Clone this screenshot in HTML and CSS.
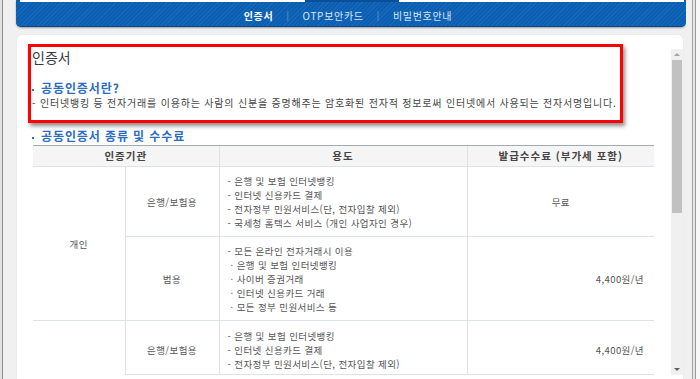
FILE: index.html
```html
<!DOCTYPE html>
<html lang="ko">
<head>
<meta charset="utf-8">
<title>인증서</title>
<link rel="stylesheet" href="styles.css">
</head>
<body>
<div class="window">
  <div class="frame-left"></div>
  <div class="main">
    <div class="topbar">
      <div class="tabstrip"><span class="tab-white"></span><span class="tab-active"></span><span class="tab-white"></span></div>
      <nav class="subnav">
        <a class="nav-item on">인증서</a><span class="sep">|</span><a class="nav-item">OTP보안카드</a><span class="sep">|</span><a class="nav-item">비밀번호안내</a>
      </nav>
    </div>
    <div class="panel">
      <div class="scroller">
        <div class="content">
          <h2 class="title">인증서</h2>
          <h3 class="bul">공동인증서란?</h3>
          <p class="desc">- 인터넷뱅킹 등 전자거래를 이용하는 사람의 신분을 증명해주는 암호화된 전자적 정보로써 인터넷에서 사용되는 전자서명입니다.</p>
          <h3 class="bul bul-2">공동인증서 종류 및 수수료</h3>
          <table class="fee">
            <colgroup><col class="c1"><col class="c2"><col class="c3"><col class="c4"></colgroup>
            <thead>
              <tr><th colspan="2">인증기관</th><th>용도</th><th>발급수수료 (부가세 포함)</th></tr>
            </thead>
            <tbody>
              <tr>
                <td rowspan="2" class="ctr">개인</td>
                <td class="ctr">은행/보험용</td>
                <td class="use">- 은행 및 보험 인터넷뱅킹<br>- 인터넷 신용카드 결제<br>- 전자정부 민원서비스(단, 전자입찰 제외)<br>- 국세청 홈텍스 서비스 (개인 사업자인 경우)</td>
                <td class="ctr">무료</td>
              </tr>
              <tr>
                <td class="ctr">범용</td>
                <td class="use">- 모든 온라인 전자거래시 이용<br><span class="sub">· 은행 및 보험 인터넷뱅킹</span><br><span class="sub">· 사이버 증권거래</span><br><span class="sub">· 인터넷 신용카드 거래</span><br><span class="sub">· 모든 정부 민원서비스 등</span></td>
                <td class="price">4,400원/년</td>
              </tr>
              <tr class="last">
                <td class="blank"></td>
                <td class="ctr">은행/보험용</td>
                <td class="use">- 은행 및 보험 인터넷뱅킹<br>- 인터넷 신용카드 결제<br>- 전자정부 민원서비스(단, 전자입찰 제외)</td>
                <td class="price">4,400원/년</td>
              </tr>
            </tbody>
          </table>
        </div>
        <div class="scrollbar">
          <div class="sb-btn sb-up"></div>
          <div class="sb-thumb"></div>
          <div class="sb-track"></div>
          <div class="sb-btn sb-down"></div>
        </div>
      </div>
      <div class="highlight"></div>
    </div>
  </div>
  <div class="frame-right"></div>
</div>
</body>
</html>
```
FILE: styles.css
```css
* { box-sizing: border-box; }
html, body { margin: 0; padding: 0; }
body {
  width: 700px;
  height: 379px;
  overflow: hidden;
  background: #f0f0f0;
  font-family: "Noto Sans CJK KR", "Noto Sans", sans-serif;
}
.window { display: flex; height: 379px; }
.frame-left {
  width: 16px;
  flex: none;
  background: linear-gradient(to right, #e2e2e2 0 2px, #8c8c8c 2px 3px, #f0f0f0 3px);
}
.frame-right {
  flex: 1;
  background: linear-gradient(to right, #f0f0f0 0 6px, #a2a2a2 6px 7px, #e6e6e6 7px 9px, #9a9a9a 9px 10px, #f8f8f8 10px);
}
.main {
  width: 670px;
  flex: none;
  display: flex;
  flex-direction: column;
}

/* top blue bar */
.topbar {
  height: 27px;
  flex: none;
  border-radius: 0 0 5px 5px;
  background-color: #0b5fb3;
  background-image: repeating-linear-gradient(135deg, rgba(255,255,255,0.06) 0 1px, rgba(255,255,255,0) 1px 3px);
  border-bottom: 1px solid #094a8e;
  box-shadow: 0 1px 2px rgba(0,0,0,0.35);
}
.tabstrip { display: flex; height: 2px; margin: 0 2px 0 4px; }
.tab-white { flex: 1; background: #fff; }
.tab-active { width: 94px; flex: none; background: #0a4f97; }
.subnav {
  display: flex;
  justify-content: center;
  align-items: center;
  padding: 7px 6px 0 0;
  font-size: 10px;
  line-height: 14px;
  letter-spacing: 0.7px;
}
.nav-item { color: #d9e6f4; }
.nav-item.on { color: #fff; font-weight: bold; }
.sep { color: #6f9fd3; margin: 0 13px; font-size: 9px; }

/* content panel */
.panel {
  position: relative;
  flex: 1;
  margin: 8px 3px 0 1px;
  background: #fff;
  border-radius: 5px 5px 0 0;
  box-shadow: 0 0 1px rgba(0,0,0,0.12);
}
.scroller {
  display: flex;
  align-items: flex-start;
  height: 340px;
  padding: 10px 0 0 11px;
}
.content {
  flex: 1;
  height: 330px;
  overflow: hidden;
  padding-left: 4px;
  color: #333;
}
.title {
  margin: 0;
  font-size: 14px;
  line-height: 24px;
  font-weight: normal;
  color: #383846;
}
.bul {
  margin: 12px 0 0;
  font-size: 12px;
  line-height: 13px;
  font-weight: bold;
  color: #2d6dbf;
  letter-spacing: 0.9px;
}
.bul::before {
  content: "";
  display: inline-block;
  width: 2px;
  height: 2px;
  background: #2d6dbf;
  margin-right: 7px;
  vertical-align: middle;
}
.bul-2 { margin-top: 20px; }
.desc {
  margin: 3px 0 0;
  font-size: 10px;
  line-height: 12px;
  color: #444;
  letter-spacing: 0.8px;
}

/* table */
.fee {
  margin: 3px 0 0 1px;
  width: 621px;
  border-collapse: collapse;
  table-layout: fixed;
  font-size: 9.5px;
  color: #555;
  letter-spacing: 0.4px;
}
.c1 { width: 92px; }
.c2 { width: 94px; }
.c3 { width: 248px; }
.c4 { width: 187px; }
.fee thead th {
  height: 21px;
  padding: 0;
  background: #f5f5f5;
  border-top: 1px solid #9eabbb;
  border-bottom: 1px solid #dde2e8;
  border-left: 1px solid #dde2e8;
  font-size: 10.5px;
  font-weight: bold;
  color: #444;
  line-height: 14px;
  letter-spacing: 1px;
}
.fee thead th:first-child { border-left: none; }
.fee td {
  padding: 7px 0 6px;
  line-height: 14px;
  border: 1px solid #dde2e8;
  vertical-align: middle;
}
.fee tr.last td { padding-top: 8px; padding-bottom: 3px; }
.fee tr td:first-child { border-left: none; }
.fee td:last-child { border-right: none; }
.fee td.blank { border-bottom: none; }
.fee .ctr { text-align: center; }
.fee .use { padding-left: 8px; }
.fee .sub { padding-left: 3px; }
.fee .price { text-align: right; padding-right: 10px; }

/* scrollbar */
.scrollbar {
  width: 12px;
  flex: none;
  height: 326px;
  margin-top: 4px;
  background: #f0f0f0;
  display: flex;
  flex-direction: column;
}
.sb-btn { height: 11px; flex: none; position: relative; }
.sb-btn::after {
  content: "";
  position: absolute;
  left: 3px;
  top: 4px;
  border-left: 3px solid transparent;
  border-right: 3px solid transparent;
}
.sb-up::after { border-bottom: 3px solid #a3a3a3; }
.sb-down::after { border-top: 3px solid #606060; }
.sb-thumb { height: 153px; margin: 0 1px; background: #c1c1c1; flex: none; }
.sb-track { flex: 1; }

/* annotation */
.highlight {
  position: absolute;
  left: 11px;
  top: 9px;
  width: 595px;
  height: 79px;
  border: 3px solid #ff0000;
  box-shadow: 2px 3px 4px rgba(0,0,0,0.45);
}
```
